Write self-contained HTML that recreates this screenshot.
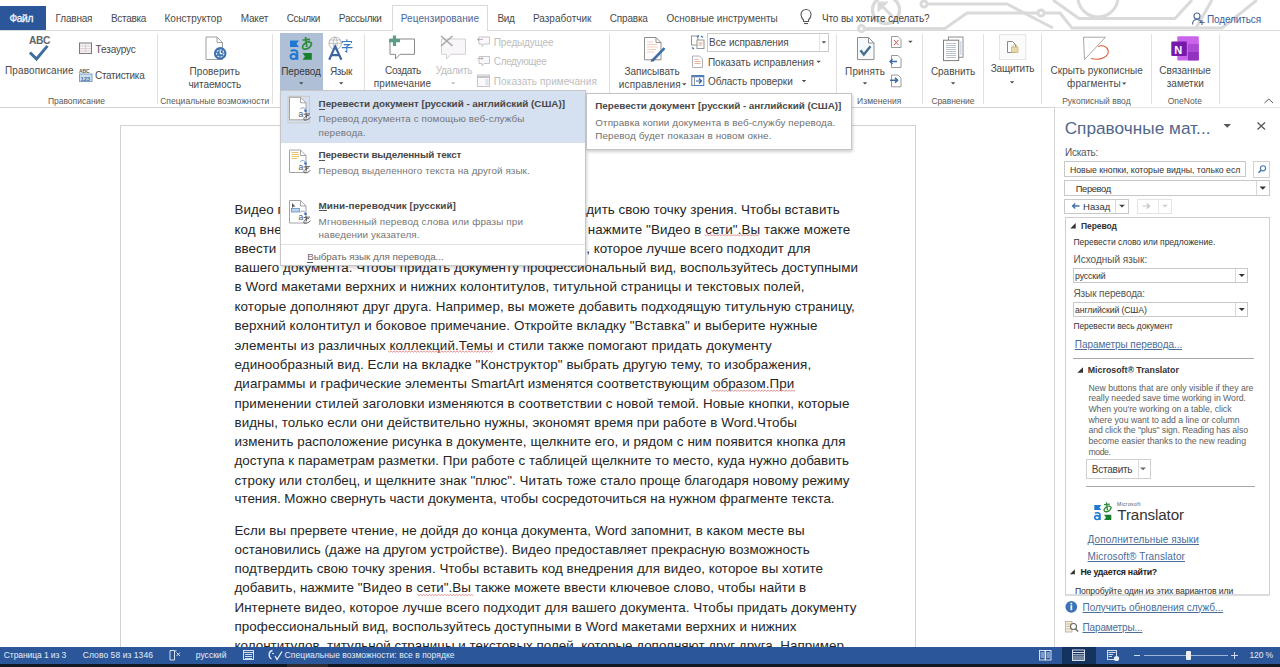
<!DOCTYPE html>
<html><head><meta charset="utf-8"><style>
html,body{margin:0;padding:0;}
body{width:1280px;height:667px;overflow:hidden;position:relative;background:#fff;font-family:"Liberation Sans",sans-serif;}
.t{position:absolute;white-space:pre;line-height:1;}
</style></head><body>
<div style="position:absolute;left:0px;top:5.5px;width:46px;height:24px;background:#2b579a;"></div>
<div style="position:absolute;left:0px;top:30px;width:1280px;height:1px;background:#dadada;"></div>
<div style="position:absolute;left:392px;top:5px;width:96px;height:26px;background:#fff;border:1px solid #dadada;border-bottom:none;box-sizing:border-box;"></div>
<div style="position:absolute;left:0px;top:107px;width:1055px;height:1px;background:#d5d5d5;"></div>
<div style="position:absolute;left:1055px;top:107px;width:225px;height:1px;background:#e6e6e6;"></div>
<div style="position:absolute;left:157px;top:34px;width:1px;height:70px;background:#e1e1e1;"></div>
<div style="position:absolute;left:272px;top:34px;width:1px;height:70px;background:#e1e1e1;"></div>
<div style="position:absolute;left:364px;top:34px;width:1px;height:70px;background:#e1e1e1;"></div>
<div style="position:absolute;left:609px;top:34px;width:1px;height:70px;background:#e1e1e1;"></div>
<div style="position:absolute;left:836px;top:34px;width:1px;height:70px;background:#e1e1e1;"></div>
<div style="position:absolute;left:922px;top:34px;width:1px;height:70px;background:#e1e1e1;"></div>
<div style="position:absolute;left:983px;top:34px;width:1px;height:70px;background:#e1e1e1;"></div>
<div style="position:absolute;left:1041px;top:34px;width:1px;height:70px;background:#e1e1e1;"></div>
<div style="position:absolute;left:1151px;top:34px;width:1px;height:70px;background:#e1e1e1;"></div>
<div style="position:absolute;left:1219px;top:34px;width:1px;height:70px;background:#e1e1e1;"></div>
<div style="position:absolute;left:279.7px;top:32.9px;width:43.7px;height:57.6px;background:#aebfd6;"></div>
<div style="position:absolute;left:120px;top:125px;width:796px;height:600px;background:#fff;border:1px solid #d2d2d2;box-sizing:border-box;"></div>
<div style="position:absolute;left:1054px;top:107px;width:1px;height:540px;background:#d4d4d4;"></div>
<div style="position:absolute;left:1064px;top:161px;width:182px;height:16px;border:1px solid #c8c8c8;box-sizing:border-box;background:#fff;"></div>
<div style="position:absolute;left:1253px;top:161px;width:17px;height:17px;border:1px solid #d0d0d0;box-sizing:border-box;background:#fff;"></div>
<div style="position:absolute;left:1064px;top:180px;width:206px;height:16px;border:1px solid #c8c8c8;box-sizing:border-box;background:#fff;"></div>
<div style="position:absolute;left:1256px;top:181px;width:1px;height:14px;background:#d8d8d8;"></div>
<div style="position:absolute;left:1064px;top:198.8px;width:65px;height:15px;border:1px solid #c8c8c8;box-sizing:border-box;background:#fff;"></div>
<div style="position:absolute;left:1115px;top:199px;width:1px;height:14px;background:#d8d8d8;"></div>
<div style="position:absolute;left:1136.7px;top:198.8px;width:35px;height:15px;border:1px solid #e3e3e3;box-sizing:border-box;background:#fff;"></div>
<div style="position:absolute;left:1158px;top:199px;width:1px;height:14px;background:#e8e8e8;"></div>
<div style="position:absolute;left:1064.5px;top:217.4px;width:205px;height:378px;border:1px solid #cfcfcf;border-bottom:1px solid #dcdcdc;box-sizing:border-box;background:#fff;"></div>
<div style="position:absolute;left:1073px;top:268px;width:175px;height:15px;border:1px solid #c8c8c8;box-sizing:border-box;background:#fff;"></div>
<div style="position:absolute;left:1235px;top:269px;width:1px;height:13px;background:#d8d8d8;"></div>
<div style="position:absolute;left:1073px;top:302.3px;width:175px;height:14.5px;border:1px solid #c8c8c8;box-sizing:border-box;background:#fff;"></div>
<div style="position:absolute;left:1235px;top:303px;width:1px;height:13px;background:#d8d8d8;"></div>
<div style="position:absolute;left:1073px;top:358.3px;width:181px;height:1px;background:#a8a8a8;"></div>
<div style="position:absolute;left:1086.4px;top:459.2px;width:64.5px;height:19.5px;border:1px solid #cfcfcf;box-sizing:border-box;background:#fff;"></div>
<div style="position:absolute;left:1137.6px;top:460px;width:1px;height:18px;background:#dcdcdc;"></div>
<div style="position:absolute;left:1086px;top:486.3px;width:169px;height:1px;background:#a8a8a8;"></div>
<div style="position:absolute;left:1064.5px;top:595px;width:205px;height:1px;background:#dcdcdc;"></div>
<svg style="position:absolute;left:0;top:0" width="1280" height="667" viewBox="0 0 1280 667"><g fill="none" stroke="#dadada" stroke-width="3">
<circle cx="886" cy="10" r="13.5" stroke-width="3.4"/>
<path d="M893 17 L881 5"/><path d="M878 2 L878 12 L888 2 Z" fill="#dadada" stroke-width="1"/>
<circle cx="924" cy="4" r="3"/>
<path d="M927 4 L1007 4 L1053 28"/>
<circle cx="861.5" cy="28.5" r="3"/>
<path d="M864.5 28.5 L945 28.5 L967 13 L1038 13"/>
<circle cx="1041" cy="13" r="3"/>
<path d="M1044 13 L1060 13 L1072 28 L1222 28 L1257 0"/>
<path d="M1053 0 L1079 18.5 L1175 18.5 L1192 0"/>
<circle cx="1098" cy="-3" r="20"/>
<path d="M1212 0 L1196 28"/>
</g></svg>
<div style="position:absolute;left:707.3px;top:32.6px;width:122.2px;height:19.1px;border:1px solid #c9c9c9;box-sizing:border-box;background:#fff;"></div>
<div style="position:absolute;left:819px;top:33.6px;width:1px;height:17px;background:#e2e2e2;"></div>
<div style="position:absolute;left:1065px;top:595.5px;width:204px;height:6px;background:#fff;"></div>
<svg style="position:absolute;left:0;top:0" width="1280" height="667" viewBox="0 0 1280 667"><g fill="none" stroke="#555" stroke-width="1.1">
<path d="M803.5 20 C801.5 18 801 16 801 14.5 C801 11.5 803.3 9.5 806 9.5 C808.7 9.5 811 11.5 811 14.5 C811 16 810.5 18 808.5 20 L808.5 21.5 L803.5 21.5 Z"/>
<path d="M804 23.5 L808 23.5"/>
</g></svg>
<svg style="position:absolute;left:0;top:0" width="1280" height="667" viewBox="0 0 1280 667"><g fill="none" stroke="#4a6a98" stroke-width="1.1">
<circle cx="1197" cy="16" r="3"/>
<path d="M1192.5 24.5 C1192.5 21 1194.5 19.5 1197 19.5 C1199 19.5 1200.5 20.5 1201 22"/>
<path d="M1199.5 22.5 L1204.5 22.5 M1202 20 L1202 25"/>
</g></svg>
<svg style="position:absolute;left:0;top:0" width="1280" height="667" viewBox="0 0 1280 667"><text x="29" y="43.8" font-family="Liberation Sans" font-weight="bold" font-size="10.2" fill="#636363" letter-spacing="-0.3">ABC</text>
<path d="M31 53.5 L36.5 59 L46.5 47" fill="none" stroke="#41709f" stroke-width="3" stroke-linecap="square"/></svg>
<svg style="position:absolute;left:0;top:0" width="1280" height="667" viewBox="0 0 1280 667"><rect x="79.5" y="43" width="12" height="10.5" fill="#f7f3f3" stroke="#7a7a7a" stroke-width="1"/>
<path d="M85.5 43 L85.5 53.5 M80 46 L91 46 M80 48.5 L91 48.5 M80 51 L91 51" stroke="#d9c8cc" stroke-width="0.8"/></svg>
<svg style="position:absolute;left:0;top:0" width="1280" height="667" viewBox="0 0 1280 667"><text x="79" y="72.8" font-family="Liberation Sans" font-weight="bold" font-size="5" fill="#555" letter-spacing="-0.1">ABC</text>
<rect x="79.5" y="74" width="12.5" height="7.5" fill="#cfe1f1" stroke="#7e9fc4" stroke-width="1"/>
<text x="80.5" y="80.6" font-family="Liberation Sans" font-weight="bold" font-size="6" fill="#4a6f98" letter-spacing="-0.2">123</text></svg>
<svg style="position:absolute;left:0;top:0" width="1280" height="667" viewBox="0 0 1280 667"><path d="M206 37 L217 37 L222.5 42.5 L222.5 59.5 L206 59.5 Z" fill="#fff" stroke="#a0a0a0" stroke-width="1"/>
<path d="M217 37 L217 42.5 L222.5 42.5" fill="none" stroke="#a0a0a0" stroke-width="1"/>
<circle cx="220.2" cy="53.4" r="6.3" fill="#3f73ad"/>
<circle cx="220.2" cy="53.4" r="3.6" fill="none" stroke="#d8e6f5" stroke-width="1.3" stroke-dasharray="2 1.2"/>
<path d="M220.2 50.5 L220.2 53.6 L222.5 53.6" stroke="#fff" stroke-width="1.1" fill="none"/></svg>
<svg style="position:absolute;left:0;top:0" width="1280" height="667" viewBox="0 0 1280 667"><path d="M290 40.5 L299 40.5 L296.5 43.7 L299 47 L290 47 Z" fill="#1f78d1"/>
<path d="M290.8 51.3 C292.5 49.8 297 49.8 297.3 52.8 L297.3 59.8" fill="none" stroke="#1f78d1" stroke-width="2"/><ellipse cx="293.6" cy="56.6" rx="3" ry="2.5" fill="none" stroke="#1f78d1" stroke-width="2"/>
<path d="M302.5 40 L310 39.3 M305.5 37 L306.8 47 M309.8 41.5 C306 41.5 302 45 302.6 47.6 C303.2 50 307.5 49.5 310 46.8 C312.5 44 311.8 41.8 308.5 41.8" fill="none" stroke="#2e8b3a" stroke-width="1.7"/>
<path d="M311.8 53 L302.5 53 L305 56.4 L302.5 59.8 L311.8 59.8 Z" fill="#17802a"/></svg>
<svg style="position:absolute;left:0;top:0" width="1280" height="667" viewBox="0 0 1280 667"><circle cx="335.2" cy="43.3" r="6.2" fill="none" stroke="#a0a0a0" stroke-width="0.8"/>
<path d="M329 43.3 L341.4 43.3 M329.8 40 L340.6 40 M335.2 37.1 C332.5 40 332.5 46.5 335.2 49.5 M335.2 37.1 C337.9 40 337.9 46.5 335.2 49.5" fill="none" stroke="#a8a8a8" stroke-width="0.7"/>
<path d="M329.2 59.8 L335.2 46.3 L341.4 59.8 M331.2 55.2 L339.4 55.2" fill="none" stroke="#3b66a3" stroke-width="2.2"/>
<path d="M346.8 39.3 L346.8 41.2 M342.3 43 L342.3 41.5 L351.5 41.5 L351.5 43 M343.8 44.6 L349.6 44.6 L346.8 46.6 L346.8 52 L345 51.2 M341.8 47.6 L352.5 47.6" fill="none" stroke="#3b7ac0" stroke-width="1.1"/></svg>
<svg style="position:absolute;left:0;top:0" width="1280" height="667" viewBox="0 0 1280 667"><path d="M390 39 L414.5 39 L414.5 54.3 L400 54.3 L395.5 59 L395.5 54.3 L390 54.3 Z" fill="#fff" stroke="#8a8a8a" stroke-width="1"/>
<path d="M394.5 35.5 L394.5 46 M389 40.7 L400 40.7" stroke="#5e9c8a" stroke-width="3.2"/></svg>
<svg style="position:absolute;left:0;top:0" width="1280" height="667" viewBox="0 0 1280 667"><path d="M441.5 39 L465.5 39 L465.5 54.3 L451 54.3 L446.5 59 L446.5 54.3 L441.5 54.3 Z" fill="#f8f6f8" stroke="#d6d0d6" stroke-width="1"/>
<path d="M441 36 L452.5 46 M452.5 36 L441 46" stroke="#a8a8a8" stroke-width="1.6"/></svg>
<svg style="position:absolute;left:0;top:0" width="1280" height="667" viewBox="0 0 1280 667"><g fill="#faf8fa" stroke="#c8c4c8" stroke-width="1">
<path d="M479 37 L489.5 37 L489.5 44 L484 44 L482 46.5 L482 44 L479 44 Z"/>
<path d="M479 56.5 L489.5 56.5 L489.5 63.5 L484 63.5 L482 66 L482 63.5 L479 63.5 Z"/>
<rect x="477.5" y="75" width="12" height="11.5"/>
</g>
<path d="M477.5 39.5 L483 39.5 M479 38 L477.5 39.5 L479 41" fill="none" stroke="#b0b0b0" stroke-width="0.9"/>
<path d="M477.5 58.5 L483 58.5 M481.5 57 L483 58.5 L481.5 60" fill="none" stroke="#b0b0b0" stroke-width="0.9"/>
<path d="M477.5 77 L489.5 77" stroke="#b8b8b8" stroke-width="1.6"/>
<path d="M485.5 80 L488.5 80 M485.5 82 L488.5 82 M485.5 84 L488.5 84" stroke="#c0c0c0" stroke-width="0.8"/></svg>
<svg style="position:absolute;left:0;top:0" width="1280" height="667" viewBox="0 0 1280 667"><path d="M644.5 37.5 L656 37.5 L661 42.5 L661 59.8 L644.5 59.8 Z" fill="#fff" stroke="#8e8e8e" stroke-width="1"/>
<path d="M656 37.5 L656 42.5 L661 42.5" fill="none" stroke="#8e8e8e" stroke-width="1"/>
<path d="M647 42 L653 42 M647 44.5 L657 44.5 M647 47 L658 47 M647 49.5 L656 49.5 M647 52 L654 52" stroke="#f4cdbb" stroke-width="1.2"/>
<path d="M652 61 L664.5 48.2" stroke="#3c6ea8" stroke-width="2.6"/>
<path d="M651.2 61.8 L652.5 59" stroke="#555" stroke-width="1"/></svg>
<svg style="position:absolute;left:0;top:0" width="1280" height="667" viewBox="0 0 1280 667"><rect x="691.5" y="36" width="6.5" height="9" fill="#fff" stroke="#8a8a8a" stroke-width="0.9"/>
<rect x="697" y="40" width="7" height="8.5" fill="#fff" stroke="#8a8a8a" stroke-width="0.9"/>
<path d="M698.5 43 L702.5 43 M698.5 45 L702 45" stroke="#e09a80" stroke-width="0.9"/>
<path d="M697 37 L699 35.5 M701 36 L703 37.5 M692 47.5 L694 49" stroke="#3d78c2" stroke-width="1.4"/>
<path d="M692.5 56 L699.5 56 L702.5 59 L702.5 67.5 L692.5 67.5 Z" fill="#fff" stroke="#a8a8a8" stroke-width="0.9"/>
<path d="M694.5 59.5 L698.5 59.5 M694.5 61.5 L700.5 61.5 M694.5 63.5 L700.5 63.5" stroke="#e6a890" stroke-width="0.9"/>
<rect x="691.8" y="75.5" width="12" height="10" fill="#fff" stroke="#4b7fbd" stroke-width="1"/>
<path d="M691.8 76.5 L703.8 76.5" stroke="#4b7fbd" stroke-width="1.5"/>
<path d="M694.5 75.5 L694.5 85.5" stroke="#8a8a8a" stroke-width="0.9"/>
<path d="M696 81 L701.5 81 M699 78.5 L701.5 81 L699 83.5" fill="none" stroke="#2f5f9e" stroke-width="1.2"/></svg>
<svg style="position:absolute;left:0;top:0" width="1280" height="667" viewBox="0 0 1280 667"><path d="M857.5 37.5 L868.5 37.5 L874 43 L874 59.6 L857.5 59.6 Z" fill="#f7fafd" stroke="#8e8e8e" stroke-width="1"/>
<path d="M868.5 37.5 L868.5 43 L874 43" fill="none" stroke="#8e8e8e" stroke-width="1"/>
<path d="M860.5 50.3 L863.8 54.5 L870.5 46.2" fill="none" stroke="#44708f" stroke-width="2.4"/></svg>
<svg style="position:absolute;left:0;top:0" width="1280" height="667" viewBox="0 0 1280 667"><g fill="#fff" stroke="#8e8e8e" stroke-width="0.9">
<path d="M891.5 36.5 L898 36.5 L901 39.5 L901 47.5 L891.5 47.5 Z"/>
<path d="M891.5 55.5 L898 55.5 L901 58.5 L901 67.5 L891.5 67.5 Z"/>
<path d="M891.5 75 L898 75 L901 78 L901 86.8 L891.5 86.8 Z"/>
</g>
<path d="M894 40 L898.5 45 M898.5 40 L894 45" stroke="#d05050" stroke-width="1"/>
<path d="M890 61.5 L897 61.5 M892.5 59 L890 61.5 L892.5 64" fill="none" stroke="#3c6aa6" stroke-width="1.4"/>
<path d="M890 80.3 L897.5 80.3 M895 77.8 L897.5 80.3 L895 82.8" fill="none" stroke="#3c6aa6" stroke-width="1.6"/></svg>
<svg style="position:absolute;left:0;top:0" width="1280" height="667" viewBox="0 0 1280 667"><rect x="948.5" y="37" width="14.5" height="20.3" fill="#fff" stroke="#8e8e8e" stroke-width="1"/>
<rect x="943.5" y="40.2" width="15.2" height="20.4" fill="#fff" stroke="#7e7e7e" stroke-width="1"/>
<path d="M946 43.5 L956 43.5 M946 45.5 L956 45.5 M946 47.5 L956 47.5 M946 49.5 L956 49.5 M946 51.5 L956 51.5 M946 53.5 L956 53.5 M946 55.5 L956 55.5 M946 57.5 L956 57.5" stroke="#a9b3c0" stroke-width="0.8"/>
<path d="M960 42 L961.5 42 M960 44 L961.5 44 M960 46 L961.5 46 M960 48 L961.5 48 M960 50 L961.5 50 M960 52 L961.5 52 M960 54 L961.5 54" stroke="#8aa0bd" stroke-width="0.8"/></svg>
<svg style="position:absolute;left:0;top:0" width="1280" height="667" viewBox="0 0 1280 667"><rect x="999.5" y="34.6" width="26.3" height="24.9" fill="#fbfbfb" stroke="#e3e3e3" stroke-width="1"/>
<path d="M1007.5 41.5 L1012.5 41.5 L1015.5 44.5 L1015.5 52.5 L1007.5 52.5 Z" fill="#fff" stroke="#7a7a7a" stroke-width="0.9"/>
<rect x="1011.5" y="47" width="6.5" height="5.5" fill="#e9d9a8" stroke="#c9b27a" stroke-width="0.7"/>
<path d="M1013 47 L1013 45.5 C1013 44 1016.5 44 1016.5 45.5 L1016.5 47" fill="none" stroke="#b9a880" stroke-width="0.8"/></svg>
<svg style="position:absolute;left:0;top:0" width="1280" height="667" viewBox="0 0 1280 667"><path d="M1105.5 37.2 L1083.5 37.2 L1084.5 59.5 Z" fill="none" stroke="#a8a8a8" stroke-width="1"/>
<path d="M1091 58.5 C1101 61 1110 56 1108 50 C1106.5 45.5 1101 45 1098 46.5" fill="none" stroke="#d4613e" stroke-width="1.1"/></svg>
<svg style="position:absolute;left:0;top:0" width="1280" height="667" viewBox="0 0 1280 667"><rect x="1177.3" y="36.3" width="21.5" height="24.1" rx="1" fill="#ca64ea"/>
<rect x="1188" y="44" width="10.8" height="8" fill="#ae4bd5"/>
<rect x="1188" y="52" width="10.8" height="8.4" fill="#9332bf"/>
<rect x="1171.3" y="41.5" width="15.5" height="14.5" rx="1" fill="#7719aa"/>
<text x="1174.3" y="53.5" font-family="Liberation Sans" font-weight="bold" font-size="11" fill="#fff">N</text></svg>
<svg style="position:absolute;left:0;top:0" width="1280" height="667" viewBox="0 0 1280 667"><path d="M1264.5 103 L1268.8 99 L1273 103" fill="none" stroke="#555" stroke-width="1"/></svg>
<div class="t" style="left:9.50px;top:13.87px;font-size:10.20px;font-weight:normal;color:#f2f5fa;letter-spacing:-0.394px;-webkit-text-stroke:0.3px #f2f5fa;">Файл</div>
<div class="t" style="left:55.60px;top:14.34px;font-size:10.00px;font-weight:normal;color:#4a4a4a;letter-spacing:-0.195px;">Главная</div>
<div class="t" style="left:111.00px;top:14.34px;font-size:10.00px;font-weight:normal;color:#4a4a4a;letter-spacing:-0.310px;">Вставка</div>
<div class="t" style="left:164.50px;top:14.34px;font-size:10.00px;font-weight:normal;color:#4a4a4a;letter-spacing:0.044px;">Конструктор</div>
<div class="t" style="left:240.80px;top:14.34px;font-size:10.00px;font-weight:normal;color:#4a4a4a;letter-spacing:-0.220px;">Макет</div>
<div class="t" style="left:286.70px;top:14.34px;font-size:10.00px;font-weight:normal;color:#4a4a4a;letter-spacing:-0.318px;">Ссылки</div>
<div class="t" style="left:338.80px;top:14.34px;font-size:10.00px;font-weight:normal;color:#4a4a4a;letter-spacing:-0.248px;">Рассылки</div>
<div class="t" style="left:400.80px;top:14.34px;font-size:10.00px;font-weight:normal;color:#48689a;letter-spacing:0.084px;">Рецензирование</div>
<div class="t" style="left:497.50px;top:14.34px;font-size:10.00px;font-weight:normal;color:#4a4a4a;letter-spacing:-0.397px;">Вид</div>
<div class="t" style="left:532.90px;top:14.34px;font-size:10.00px;font-weight:normal;color:#4a4a4a;letter-spacing:0.026px;">Разработчик</div>
<div class="t" style="left:609.80px;top:14.34px;font-size:10.00px;font-weight:normal;color:#4a4a4a;letter-spacing:-0.190px;">Справка</div>
<div class="t" style="left:666.50px;top:14.34px;font-size:10.00px;font-weight:normal;color:#4a4a4a;letter-spacing:0.016px;">Основные инструменты</div>
<div class="t" style="left:822.00px;top:14.34px;font-size:10.00px;font-weight:normal;color:#444;letter-spacing:-0.143px;">Что вы хотите сделать?</div>
<div class="t" style="left:1207.00px;top:14.84px;font-size:10.00px;font-weight:normal;color:#3b5f91;letter-spacing:-0.122px;">Поделиться</div>
<div class="t" style="left:47.90px;top:97.10px;font-size:8.50px;font-weight:normal;color:#5a5a5a;">Правописание</div>
<div class="t" style="left:160.20px;top:96.90px;font-size:8.50px;font-weight:normal;color:#5a5a5a;letter-spacing:0.025px;">Специальные возможности</div>
<div class="t" style="left:857.10px;top:96.60px;font-size:8.50px;font-weight:normal;color:#5a5a5a;letter-spacing:0.028px;">Изменения</div>
<div class="t" style="left:931.40px;top:96.60px;font-size:8.50px;font-weight:normal;color:#5a5a5a;letter-spacing:-0.078px;">Сравнение</div>
<div class="t" style="left:1062.20px;top:96.80px;font-size:8.50px;font-weight:normal;color:#5a5a5a;">Рукописный ввод</div>
<div class="t" style="left:1167.70px;top:96.80px;font-size:8.50px;font-weight:normal;color:#5a5a5a;letter-spacing:0.026px;">OneNote</div>
<div class="t" style="left:5.00px;top:66.08px;font-size:10.00px;font-weight:normal;color:#4a4a4a;letter-spacing:0.120px;">Правописание</div>
<div class="t" style="left:95.60px;top:45.44px;font-size:10.00px;font-weight:normal;color:#4a4a4a;letter-spacing:-0.144px;">Тезаурус</div>
<div class="t" style="left:95.00px;top:71.08px;font-size:10.00px;font-weight:normal;color:#4a4a4a;letter-spacing:-0.312px;">Статистика</div>
<div class="t" style="left:189.60px;top:66.73px;font-size:10.00px;font-weight:normal;color:#4a4a4a;letter-spacing:0.043px;">Проверить</div>
<div class="t" style="left:188.40px;top:79.93px;font-size:10.00px;font-weight:normal;color:#4a4a4a;letter-spacing:-0.081px;">читаемость</div>
<div class="t" style="left:281.20px;top:66.63px;font-size:10.00px;font-weight:normal;color:#3a3a3a;letter-spacing:-0.107px;">Перевод</div>
<div class="t" style="left:330.00px;top:66.63px;font-size:10.00px;font-weight:normal;color:#4a4a4a;letter-spacing:-0.368px;">Язык</div>
<div class="t" style="left:385.00px;top:66.23px;font-size:10.00px;font-weight:normal;color:#4a4a4a;letter-spacing:-0.286px;">Создать</div>
<div class="t" style="left:373.80px;top:78.93px;font-size:10.00px;font-weight:normal;color:#4a4a4a;letter-spacing:0.139px;">примечание</div>
<div class="t" style="left:435.70px;top:66.23px;font-size:10.00px;font-weight:normal;color:#bdbdbd;letter-spacing:-0.240px;">Удалить</div>
<div class="t" style="left:493.80px;top:38.23px;font-size:10.00px;font-weight:normal;color:#bdbdbd;letter-spacing:-0.169px;">Предыдущее</div>
<div class="t" style="left:493.80px;top:56.83px;font-size:10.00px;font-weight:normal;color:#bdbdbd;letter-spacing:-0.364px;">Следующее</div>
<div class="t" style="left:493.80px;top:76.73px;font-size:10.00px;font-weight:normal;color:#bdbdbd;letter-spacing:0.097px;">Показать примечания</div>
<div class="t" style="left:624.50px;top:66.83px;font-size:10.00px;font-weight:normal;color:#4a4a4a;">Записывать</div>
<div class="t" style="left:618.70px;top:79.73px;font-size:10.00px;font-weight:normal;color:#4a4a4a;letter-spacing:0.197px;">исправления</div>
<div class="t" style="left:709.00px;top:38.13px;font-size:10.00px;font-weight:normal;color:#4a4a4a;letter-spacing:-0.029px;">Все исправления</div>
<div class="t" style="left:707.90px;top:57.53px;font-size:10.00px;font-weight:normal;color:#4a4a4a;letter-spacing:0.029px;">Показать исправления</div>
<div class="t" style="left:707.90px;top:76.83px;font-size:10.00px;font-weight:normal;color:#4a4a4a;">Область проверки</div>
<div class="t" style="left:845.10px;top:66.63px;font-size:10.00px;font-weight:normal;color:#4a4a4a;letter-spacing:0.120px;">Принять</div>
<div class="t" style="left:930.90px;top:66.63px;font-size:10.00px;font-weight:normal;color:#4a4a4a;letter-spacing:-0.032px;">Сравнить</div>
<div class="t" style="left:990.80px;top:64.13px;font-size:10.00px;font-weight:normal;color:#4a4a4a;letter-spacing:-0.234px;">Защитить</div>
<div class="t" style="left:1050.50px;top:66.33px;font-size:10.00px;font-weight:normal;color:#4a4a4a;letter-spacing:0.042px;">Скрыть рукописные</div>
<div class="t" style="left:1067.10px;top:78.93px;font-size:10.00px;font-weight:normal;color:#4a4a4a;letter-spacing:0.108px;">фрагменты</div>
<div class="t" style="left:1159.30px;top:66.33px;font-size:10.00px;font-weight:normal;color:#4a4a4a;letter-spacing:-0.042px;">Связанные</div>
<div class="t" style="left:1166.70px;top:78.93px;font-size:10.00px;font-weight:normal;color:#4a4a4a;letter-spacing:0.044px;">заметки</div>
<div class="t" style="left:234.50px;top:203.26px;font-size:13.40px;font-weight:normal;color:#262626;letter-spacing:0.028px;">Видео предоставляет прекрасную возможность подтвердить свою точку зрения. Чтобы вставить</div>
<div class="t" style="left:234.50px;top:222.66px;font-size:13.40px;font-weight:normal;color:#262626;letter-spacing:0.080px;">код внедрения для видео, которое вы хотите добавить, нажмите &quot;Видео в сети&quot;.Вы также можете</div>
<div class="t" style="left:234.50px;top:241.86px;font-size:13.40px;font-weight:normal;color:#262626;">ввести ключевое слово, чтобы найти в Интернете видео, которое лучше всего подходит для</div>
<div class="t" style="left:234.50px;top:261.26px;font-size:13.40px;font-weight:normal;color:#262626;letter-spacing:0.030px;">вашего документа. Чтобы придать документу профессиональный вид, воспользуйтесь доступными</div>
<div class="t" style="left:234.50px;top:280.36px;font-size:13.40px;font-weight:normal;color:#262626;letter-spacing:0.054px;">в Word макетами верхних и нижних колонтитулов, титульной страницы и текстовых полей,</div>
<div class="t" style="left:234.50px;top:299.66px;font-size:13.40px;font-weight:normal;color:#262626;letter-spacing:0.100px;">которые дополняют друг друга. Например, вы можете добавить подходящую титульную страницу,</div>
<div class="t" style="left:234.50px;top:318.86px;font-size:13.40px;font-weight:normal;color:#262626;letter-spacing:0.078px;">верхний колонтитул и боковое примечание. Откройте вкладку &quot;Вставка&quot; и выберите нужные</div>
<div class="t" style="left:234.50px;top:338.56px;font-size:13.40px;font-weight:normal;color:#262626;letter-spacing:0.086px;">элементы из различных коллекций.Темы и стили также помогают придать документу</div>
<div class="t" style="left:234.50px;top:357.86px;font-size:13.40px;font-weight:normal;color:#262626;letter-spacing:0.093px;">единообразный вид. Если на вкладке &quot;Конструктор&quot; выбрать другую тему, то изображения,</div>
<div class="t" style="left:234.50px;top:377.16px;font-size:13.40px;font-weight:normal;color:#262626;letter-spacing:0.048px;">диаграммы и графические элементы SmartArt изменятся соответствующим образом.При</div>
<div class="t" style="left:234.50px;top:396.66px;font-size:13.40px;font-weight:normal;color:#262626;letter-spacing:0.084px;">применении стилей заголовки изменяются в соответствии с новой темой. Новые кнопки, которые</div>
<div class="t" style="left:234.50px;top:415.86px;font-size:13.40px;font-weight:normal;color:#262626;letter-spacing:0.058px;">видны, только если они действительно нужны, экономят время при работе в Word.Чтобы</div>
<div class="t" style="left:234.50px;top:435.16px;font-size:13.40px;font-weight:normal;color:#262626;letter-spacing:0.086px;">изменить расположение рисунка в документе, щелкните его, и рядом с ним появится кнопка для</div>
<div class="t" style="left:234.50px;top:454.46px;font-size:13.40px;font-weight:normal;color:#262626;letter-spacing:0.050px;">доступа к параметрам разметки. При работе с таблицей щелкните то место, куда нужно добавить</div>
<div class="t" style="left:234.50px;top:473.66px;font-size:13.40px;font-weight:normal;color:#262626;letter-spacing:0.061px;">строку или столбец, и щелкните знак &quot;плюс&quot;. Читать тоже стало проще благодаря новому режиму</div>
<div class="t" style="left:234.50px;top:492.26px;font-size:13.40px;font-weight:normal;color:#262626;letter-spacing:-0.021px;">чтения. Можно свернуть части документа, чтобы сосредоточиться на нужном фрагменте текста.</div>
<div class="t" style="left:234.50px;top:523.86px;font-size:13.40px;font-weight:normal;color:#262626;letter-spacing:0.057px;">Если вы прервете чтение, не дойдя до конца документа, Word запомнит, в каком месте вы</div>
<div class="t" style="left:234.50px;top:543.06px;font-size:13.40px;font-weight:normal;color:#262626;letter-spacing:0.033px;">остановились (даже на другом устройстве). Видео предоставляет прекрасную возможность</div>
<div class="t" style="left:234.50px;top:562.26px;font-size:13.40px;font-weight:normal;color:#262626;letter-spacing:0.028px;">подтвердить свою точку зрения. Чтобы вставить код внедрения для видео, которое вы хотите</div>
<div class="t" style="left:234.50px;top:581.46px;font-size:13.40px;font-weight:normal;color:#262626;letter-spacing:0.024px;">добавить, нажмите &quot;Видео в сети&quot;.Вы также можете ввести ключевое слово, чтобы найти в</div>
<div class="t" style="left:234.50px;top:600.66px;font-size:13.40px;font-weight:normal;color:#262626;letter-spacing:0.044px;">Интернете видео, которое лучше всего подходит для вашего документа. Чтобы придать документу</div>
<div class="t" style="left:234.50px;top:619.86px;font-size:13.40px;font-weight:normal;color:#262626;letter-spacing:0.056px;">профессиональный вид, воспользуйтесь доступными в Word макетами верхних и нижних</div>
<div class="t" style="left:234.50px;top:639.06px;font-size:13.40px;font-weight:normal;color:#262626;letter-spacing:0.025px;">колонтитулов, титульной страницы и текстовых полей, которые дополняют друг друга. Например,</div>
<div class="t" style="left:1064.70px;top:119.94px;font-size:17.20px;font-weight:normal;color:#50688a;letter-spacing:0.024px;">Справочные мат...</div>
<div class="t" style="left:1065.00px;top:148.34px;font-size:10.00px;font-weight:normal;color:#555;letter-spacing:-0.242px;">Искать:</div>
<div class="t" style="left:1070.00px;top:165.84px;font-size:8.70px;font-weight:normal;color:#333;">Новые кнопки, которые видны, только есл</div>
<div class="t" style="left:1075.70px;top:185.23px;font-size:9.30px;font-weight:normal;color:#333;letter-spacing:-0.319px;">Перевод</div>
<div class="t" style="left:1083.00px;top:201.86px;font-size:9.50px;font-weight:normal;color:#333;letter-spacing:0.036px;">Назад</div>
<div class="t" style="left:1080.90px;top:222.10px;font-size:8.50px;font-weight:bold;color:#333;letter-spacing:-0.049px;">Перевод</div>
<div class="t" style="left:1073.50px;top:237.80px;font-size:8.50px;font-weight:normal;color:#333;letter-spacing:-0.025px;">Перевести слово или предложение.</div>
<div class="t" style="left:1073.50px;top:254.53px;font-size:10.00px;font-weight:normal;color:#555;">Исходный язык:</div>
<div class="t" style="left:1075.00px;top:272.04px;font-size:8.70px;font-weight:normal;color:#333;letter-spacing:-0.103px;">русский</div>
<div class="t" style="left:1073.50px;top:288.94px;font-size:10.00px;font-weight:normal;color:#555;letter-spacing:-0.105px;">Язык перевода:</div>
<div class="t" style="left:1075.00px;top:306.44px;font-size:8.70px;font-weight:normal;color:#333;letter-spacing:-0.111px;">английский (США)</div>
<div class="t" style="left:1073.50px;top:322.49px;font-size:8.40px;font-weight:normal;color:#333;letter-spacing:-0.039px;">Перевести весь документ</div>
<div class="t" style="left:1074.80px;top:340.04px;font-size:10.00px;font-weight:normal;color:#4b6d98;letter-spacing:-0.055px;text-decoration:underline;">Параметры перевода...</div>
<div class="t" style="left:1087.80px;top:366.15px;font-size:8.80px;font-weight:bold;color:#333;">Microsoft® Translator</div>
<div class="t" style="left:1088.40px;top:383.84px;font-size:8.70px;font-weight:normal;color:#5e5e5e;letter-spacing:-0.013px;">New buttons that are only visible if they are</div>
<div class="t" style="left:1088.40px;top:394.49px;font-size:8.70px;font-weight:normal;color:#5e5e5e;letter-spacing:-0.028px;">really needed save time working in Word.</div>
<div class="t" style="left:1088.40px;top:405.14px;font-size:8.70px;font-weight:normal;color:#5e5e5e;">When you&#x27;re working on a table, click</div>
<div class="t" style="left:1088.40px;top:415.79px;font-size:8.70px;font-weight:normal;color:#5e5e5e;">where you want to add a line or column</div>
<div class="t" style="left:1088.40px;top:426.44px;font-size:8.70px;font-weight:normal;color:#5e5e5e;letter-spacing:-0.083px;">and click the &quot;plus&quot; sign. Reading has also</div>
<div class="t" style="left:1088.40px;top:437.09px;font-size:8.70px;font-weight:normal;color:#5e5e5e;letter-spacing:-0.034px;">become easier thanks to the new reading</div>
<div class="t" style="left:1088.40px;top:447.74px;font-size:8.70px;font-weight:normal;color:#5e5e5e;letter-spacing:-0.396px;">mode.</div>
<div class="t" style="left:1091.80px;top:465.14px;font-size:10.00px;font-weight:normal;color:#444;letter-spacing:-0.236px;">Вставить</div>
<div class="t" style="left:1117.30px;top:506.53px;font-size:15.20px;font-weight:normal;color:#333;letter-spacing:-0.116px;">Translator</div>
<div class="t" style="left:1116.90px;top:501.57px;font-size:5.00px;font-weight:normal;color:#555;letter-spacing:0.402px;">Microsoft</div>
<div class="t" style="left:1087.60px;top:534.73px;font-size:10.00px;font-weight:normal;color:#4b6d98;letter-spacing:0.116px;text-decoration:underline;">Дополнительные языки</div>
<div class="t" style="left:1087.60px;top:551.83px;font-size:10.00px;font-weight:normal;color:#4b6d98;letter-spacing:0.106px;text-decoration:underline;">Microsoft® Translator</div>
<div class="t" style="left:1080.50px;top:567.65px;font-size:8.80px;font-weight:bold;color:#222;letter-spacing:-0.265px;">Не удается найти?</div>
<div class="t" style="left:1074.90px;top:587.02px;font-size:8.60px;font-weight:normal;color:#333;letter-spacing:-0.066px;">Попробуйте один из этих вариантов или</div>
<div class="t" style="left:1082.50px;top:602.83px;font-size:10.00px;font-weight:normal;color:#4b6d98;letter-spacing:-0.036px;text-decoration:underline;">Получить обновления служб...</div>
<div class="t" style="left:1082.50px;top:622.73px;font-size:10.00px;font-weight:normal;color:#4b6d98;letter-spacing:-0.145px;text-decoration:underline;">Параметры...</div>
<svg style="position:absolute;left:0;top:0" width="1280" height="667" viewBox="0 0 1280 667"><path d="M299.0 82.14999999999999 L303.4 82.14999999999999 L301.2 84.45 Z" fill="#4a4a4a"/></svg>
<svg style="position:absolute;left:0;top:0" width="1280" height="667" viewBox="0 0 1280 667"><path d="M339.0 82.14999999999999 L343.4 82.14999999999999 L341.2 84.45 Z" fill="#4a4a4a"/></svg>
<svg style="position:absolute;left:0;top:0" width="1280" height="667" viewBox="0 0 1280 667"><path d="M451.0 82.14999999999999 L455.4 82.14999999999999 L453.2 84.45 Z" fill="#bdbdbd"/></svg>
<svg style="position:absolute;left:0;top:0" width="1280" height="667" viewBox="0 0 1280 667"><path d="M682.0999999999999 83.14999999999999 L686.5 83.14999999999999 L684.3 85.45 Z" fill="#4a4a4a"/></svg>
<svg style="position:absolute;left:0;top:0" width="1280" height="667" viewBox="0 0 1280 667"><path d="M821.6999999999999 41.15 L826.1 41.15 L823.9 43.449999999999996 Z" fill="#4a4a4a"/></svg>
<svg style="position:absolute;left:0;top:0" width="1280" height="667" viewBox="0 0 1280 667"><path d="M816.4 60.65 L820.8000000000001 60.65 L818.6 62.949999999999996 Z" fill="#4a4a4a"/></svg>
<svg style="position:absolute;left:0;top:0" width="1280" height="667" viewBox="0 0 1280 667"><path d="M801.8 80.05 L806.2 80.05 L804 82.35000000000001 Z" fill="#4a4a4a"/></svg>
<svg style="position:absolute;left:0;top:0" width="1280" height="667" viewBox="0 0 1280 667"><path d="M862.8 82.14999999999999 L867.2 82.14999999999999 L865 84.45 Z" fill="#4a4a4a"/></svg>
<svg style="position:absolute;left:0;top:0" width="1280" height="667" viewBox="0 0 1280 667"><path d="M908.1999999999999 40.65 L912.6 40.65 L910.4 42.949999999999996 Z" fill="#4a4a4a"/></svg>
<svg style="position:absolute;left:0;top:0" width="1280" height="667" viewBox="0 0 1280 667"><path d="M950.9 82.14999999999999 L955.3000000000001 82.14999999999999 L953.1 84.45 Z" fill="#4a4a4a"/></svg>
<svg style="position:absolute;left:0;top:0" width="1280" height="667" viewBox="0 0 1280 667"><path d="M1009.9 81.14999999999999 L1014.3000000000001 81.14999999999999 L1012.1 83.45 Z" fill="#4a4a4a"/></svg>
<svg style="position:absolute;left:0;top:0" width="1280" height="667" viewBox="0 0 1280 667"><path d="M1122.0 82.44999999999999 L1126.4 82.44999999999999 L1124.2 84.75 Z" fill="#4a4a4a"/></svg>
<svg style="position:absolute;left:0;top:0" width="1280" height="667" viewBox="0 0 1280 667"><path d="M1223.5 124 L1231 124 L1227.25 127.8 Z" fill="#555"/>
<path d="M1257.5 122.5 L1265 129.5 M1265 122.5 L1257.5 129.5" stroke="#555" stroke-width="1.3"/>
<circle cx="1263" cy="168.3" r="2.6" fill="none" stroke="#4a78b0" stroke-width="1.1"/>
<path d="M1261.2 170.1 L1258.5 172.8" stroke="#4a78b0" stroke-width="1.5"/>
<path d="M1259.5 186.5 L1266 186.5 L1262.75 189.8 Z" fill="#333"/>
<path d="M1072.5 206 L1079.5 206 M1075.3 203.5 L1072.5 206 L1075.3 208.5" fill="none" stroke="#3f6fa8" stroke-width="1.3"/>
<path d="M1119 204.8 L1125 204.8 L1122 207.6 Z" fill="#444"/>
<path d="M1142.5 206 L1149.5 206 M1146.8 203.5 L1149.5 206 L1146.8 208.5" fill="none" stroke="#c4c4c4" stroke-width="1.2"/>
<path d="M1162 204.8 L1168 204.8 L1165 207.6 Z" fill="#d0d0d0"/>
<path d="M1070.3 228.5 L1075.7 223 L1075.7 228.5 Z" fill="#333"/>
<path d="M1238.8 274 L1244.8 274 L1241.8 277 Z" fill="#333"/>
<path d="M1238.8 308 L1244.8 308 L1241.8 311 Z" fill="#333"/>
<path d="M1077.3 372.8 L1083 367.3 L1083 372.8 Z" fill="#333"/>
<path d="M1140 467.5 L1146 467.5 L1143 470.3 Z" fill="#666"/>
<path d="M1069.8 574.3 L1074.9 569.2 L1074.9 574.3 Z" fill="#333"/>
</svg>
<svg style="position:absolute;left:0;top:0" width="1280" height="667" viewBox="0 0 1280 667"><g transform="translate(1094.3 502.3) scale(0.78) translate(-290 -37)"><path d="M290 40.5 L299 40.5 L296.5 43.7 L299 47 L290 47 Z" fill="#1f78d1"/>
<path d="M290.8 51.3 C292.5 49.8 297 49.8 297.3 52.8 L297.3 59.8" fill="none" stroke="#1f78d1" stroke-width="2"/><ellipse cx="293.6" cy="56.6" rx="3" ry="2.5" fill="none" stroke="#1f78d1" stroke-width="2"/>
<path d="M302.5 40 L310 39.3 M305.5 37 L306.8 47 M309.8 41.5 C306 41.5 302 45 302.6 47.6 C303.2 50 307.5 49.5 310 46.8 C312.5 44 311.8 41.8 308.5 41.8" fill="none" stroke="#2e8b3a" stroke-width="1.7"/>
<path d="M311.8 53 L302.5 53 L305 56.4 L302.5 59.8 L311.8 59.8 Z" fill="#17802a"/></g></svg>
<svg style="position:absolute;left:0;top:0" width="1280" height="667" viewBox="0 0 1280 667"><circle cx="1071.3" cy="606.8" r="5.9" fill="#3a73b8"/>
<rect x="1070.5" y="605.3" width="1.7" height="4.8" fill="#fff"/>
<rect x="1070.5" y="602.8" width="1.7" height="1.6" fill="#fff"/>
<rect x="1065.5" y="621.5" width="6.5" height="10.5" fill="#f4efe6" stroke="#b8a890" stroke-width="0.8"/>
<path d="M1066.5 624 L1071 624 M1066.5 626.5 L1071 626.5 M1066.5 629 L1071 629" stroke="#c9a860" stroke-width="0.8"/>
<circle cx="1073.5" cy="626.5" r="3" fill="#fff" stroke="#666" stroke-width="1.1"/>
<path d="M1075.5 628.8 L1078 631.5" stroke="#666" stroke-width="1.3"/></svg>
<svg style="position:absolute;left:0;top:0" width="1280" height="667" viewBox="0 0 1280 667"><path d="M704.8 234.5 L706.3 236.1 L707.8 234.5 L709.3 236.1 L710.8 234.5 L712.3 236.1 L713.8 234.5 L715.3 236.1 L716.8 234.5 L718.3 236.1 L719.8 234.5 L721.3 236.1 L722.8 234.5 L724.3 236.1 L725.8 234.5 L727.3 236.1 L728.8 234.5 L730.3 236.1 L731.8 234.5 L733.3 236.1 L734.8 234.5 L736.3 236.1 L737.8 234.5 L739.3 236.1 L740.8 234.5 L742.3 236.1 L743.8 234.5 L745.3 236.1 L746.8 234.5 L748.3 236.1 L749.8 234.5 L751.3 236.1 L752.8 234.5 L754.3 236.1 L755.8 234.5 L757.3 236.1 L758.8 234.5" fill="none" stroke="#e07878" stroke-width="0.8"/></svg>
<svg style="position:absolute;left:0;top:0" width="1280" height="667" viewBox="0 0 1280 667"><path d="M388.0 350.8 L389.5 352.4 L391.0 350.8 L392.5 352.4 L394.0 350.8 L395.5 352.4 L397.0 350.8 L398.5 352.4 L400.0 350.8 L401.5 352.4 L403.0 350.8 L404.5 352.4 L406.0 350.8 L407.5 352.4 L409.0 350.8 L410.5 352.4 L412.0 350.8 L413.5 352.4 L415.0 350.8 L416.5 352.4 L418.0 350.8 L419.5 352.4 L421.0 350.8 L422.5 352.4 L424.0 350.8 L425.5 352.4 L427.0 350.8 L428.5 352.4 L430.0 350.8 L431.5 352.4 L433.0 350.8 L434.5 352.4 L436.0 350.8 L437.5 352.4 L439.0 350.8 L440.5 352.4 L442.0 350.8 L443.5 352.4 L445.0 350.8 L446.5 352.4 L448.0 350.8 L449.5 352.4 L451.0 350.8 L452.5 352.4 L454.0 350.8 L455.5 352.4 L457.0 350.8 L458.5 352.4 L460.0 350.8 L461.5 352.4 L463.0 350.8 L464.5 352.4 L466.0 350.8 L467.5 352.4 L469.0 350.8 L470.5 352.4 L472.0 350.8 L473.5 352.4 L475.0 350.8 L476.5 352.4 L478.0 350.8 L479.5 352.4 L481.0 350.8 L482.5 352.4 L484.0 350.8 L485.5 352.4 L487.0 350.8 L488.5 352.4 L490.0 350.8 L491.5 352.4 L493.0 350.8" fill="none" stroke="#e07878" stroke-width="0.8"/></svg>
<svg style="position:absolute;left:0;top:0" width="1280" height="667" viewBox="0 0 1280 667"><path d="M711.2 389.9 L712.7 391.5 L714.2 389.9 L715.7 391.5 L717.2 389.9 L718.7 391.5 L720.2 389.9 L721.7 391.5 L723.2 389.9 L724.7 391.5 L726.2 389.9 L727.7 391.5 L729.2 389.9 L730.7 391.5 L732.2 389.9 L733.7 391.5 L735.2 389.9 L736.7 391.5 L738.2 389.9 L739.7 391.5 L741.2 389.9 L742.7 391.5 L744.2 389.9 L745.7 391.5 L747.2 389.9 L748.7 391.5 L750.2 389.9 L751.7 391.5 L753.2 389.9 L754.7 391.5 L756.2 389.9 L757.7 391.5 L759.2 389.9 L760.7 391.5 L762.2 389.9 L763.7 391.5 L765.2 389.9 L766.7 391.5 L768.2 389.9 L769.7 391.5 L771.2 389.9 L772.7 391.5 L774.2 389.9 L775.7 391.5 L777.2 389.9 L778.7 391.5 L780.2 389.9 L781.7 391.5 L783.2 389.9 L784.7 391.5 L786.2 389.9 L787.7 391.5 L789.2 389.9 L790.7 391.5 L792.2 389.9 L793.7 391.5 L795.2 389.9" fill="none" stroke="#e07878" stroke-width="0.8"/></svg>
<svg style="position:absolute;left:0;top:0" width="1280" height="667" viewBox="0 0 1280 667"><path d="M417.6 594.2 L419.1 595.8 L420.6 594.2 L422.1 595.8 L423.6 594.2 L425.1 595.8 L426.6 594.2 L428.1 595.8 L429.6 594.2 L431.1 595.8 L432.6 594.2 L434.1 595.8 L435.6 594.2 L437.1 595.8 L438.6 594.2 L440.1 595.8 L441.6 594.2 L443.1 595.8 L444.6 594.2 L446.1 595.8 L447.6 594.2 L449.1 595.8 L450.6 594.2 L452.1 595.8 L453.6 594.2 L455.1 595.8 L456.6 594.2 L458.1 595.8 L459.6 594.2 L461.1 595.8 L462.6 594.2 L464.1 595.8 L465.6 594.2 L467.1 595.8 L468.6 594.2 L470.1 595.8 L471.6 594.2 L473.1 595.8" fill="none" stroke="#e07878" stroke-width="0.8"/></svg>
<div style="position:absolute;left:279.5px;top:90px;width:306px;height:175.5px;background:#fff;border:1px solid #c6c6c6;box-sizing:border-box;box-shadow:1px 2px 3px rgba(0,0,0,0.18);"></div>
<div style="position:absolute;left:280.5px;top:90.5px;width:304.5px;height:52px;background:#d5e0f1;"></div>
<div style="position:absolute;left:280.5px;top:244px;width:304.5px;height:1px;background:#e2e2e2;"></div>
<svg style="position:absolute;left:0;top:0" width="1280" height="667" viewBox="0 0 1280 667"><rect x="288" y="96.3" width="21.5" height="26.5" fill="none" stroke="#cfc8c0" stroke-width="1"/><path d="M289.5 97.3 L300.5 97.3 L306 102.8 L306 119.8 L289.5 119.8 Z" fill="#fff" stroke="#9a9a9a" stroke-width="0.9"/>
<path d="M300.5 97.3 L300.5 102.8 L306 102.8" fill="none" stroke="#9a9a9a" stroke-width="0.9"/>
<text x="298.5" y="116.8" font-family="Liberation Sans" font-size="8.5" fill="#555">a</text>
<path d="M303.5 114.3 L310 113.8 M306 112.8 L306.5 117.8 M309 115.3 C306 115.3 303 117.8 304 119.8 C305 120.8 309 119.8 310.5 117.3" fill="none" stroke="#555" stroke-width="0.9"/>
<path d="M300 109.3 C301 107.8 303 107.3 304.5 108.3 L305.5 110.3" fill="none" stroke="#7a9cc0" stroke-width="0.9"/>
<circle cx="305.5" cy="110.8" r="1.3" fill="#3a73b8"/></svg>
<svg style="position:absolute;left:0;top:0" width="1280" height="667" viewBox="0 0 1280 667"><path d="M289.5 150.0 L300.5 150.0 L306 155.5 L306 172.5 L289.5 172.5 Z" fill="#fff" stroke="#9a9a9a" stroke-width="0.9"/>
<path d="M300.5 150.0 L300.5 155.5 L306 155.5" fill="none" stroke="#9a9a9a" stroke-width="0.9"/>
<text x="298.5" y="169.5" font-family="Liberation Sans" font-size="8.5" fill="#555">a</text>
<path d="M303.5 167.0 L310 166.5 M306 165.5 L306.5 170.5 M309 168.0 C306 168.0 303 170.5 304 172.5 C305 173.5 309 172.5 310.5 170.0" fill="none" stroke="#555" stroke-width="0.9"/>
<path d="M300 162.0 C301 160.5 303 160.0 304.5 161.0 L305.5 163.0" fill="none" stroke="#7a9cc0" stroke-width="0.9"/>
<circle cx="305.5" cy="163.5" r="1.3" fill="#3a73b8"/><path d="M291.5 152.5 L298.5 152.5 M291.5 154.5 L299 154.5 M291.5 156.5 L299 156.5 M291.5 158.5 L297 158.5" stroke="#e8c070" stroke-width="1"/></svg>
<svg style="position:absolute;left:0;top:0" width="1280" height="667" viewBox="0 0 1280 667"><path d="M289.5 200.5 L300.5 200.5 L306 206 L306 223 L289.5 223 Z" fill="#fff" stroke="#9a9a9a" stroke-width="0.9"/>
<path d="M300.5 200.5 L300.5 206 L306 206" fill="none" stroke="#9a9a9a" stroke-width="0.9"/>
<text x="298.5" y="220" font-family="Liberation Sans" font-size="8.5" fill="#555">a</text>
<path d="M303.5 217.5 L310 217 M306 216 L306.5 221 M309 218.5 C306 218.5 303 221 304 223 C305 224 309 223 310.5 220.5" fill="none" stroke="#555" stroke-width="0.9"/>
<path d="M300 212.5 C301 211 303 210.5 304.5 211.5 L305.5 213.5" fill="none" stroke="#7a9cc0" stroke-width="0.9"/>
<circle cx="305.5" cy="214" r="1.3" fill="#3a73b8"/><path d="M292 203 L292 208 L293.5 206.5 L295.5 206.5 Z" fill="#555"/>
<rect x="291.5" y="208.5" width="8" height="3.5" fill="#bcd4ee" stroke="#5d8fc8" stroke-width="0.8"/></svg>
<div style="position:absolute;left:318.6px;top:108.8px;width:6.399999999999977px;height:0.9px;background:#555;"></div>
<div style="position:absolute;left:318.6px;top:159.6px;width:6.399999999999977px;height:0.9px;background:#555;"></div>
<div style="position:absolute;left:318.6px;top:210.3px;width:8.399999999999977px;height:0.9px;background:#555;"></div>
<div style="position:absolute;left:307.2px;top:261.6px;width:5.800000000000011px;height:0.9px;background:#555;"></div>
<div class="t" style="left:318.60px;top:99.12px;font-size:9.90px;font-weight:bold;color:#484848;letter-spacing:-0.034px;">Перевести документ [русский - английский (США)]</div>
<div class="t" style="left:318.60px;top:114.22px;font-size:9.90px;font-weight:normal;color:#767676;letter-spacing:0.095px;">Перевод документа с помощью веб-службы</div>
<div class="t" style="left:318.60px;top:127.72px;font-size:9.90px;font-weight:normal;color:#767676;letter-spacing:0.095px;">перевода.</div>
<div class="t" style="left:318.60px;top:149.92px;font-size:9.90px;font-weight:bold;color:#484848;letter-spacing:-0.172px;">Перевести выделенный текст</div>
<div class="t" style="left:318.60px;top:165.52px;font-size:9.90px;font-weight:normal;color:#767676;letter-spacing:0.080px;">Перевод выделенного текста на другой язык.</div>
<div class="t" style="left:318.60px;top:200.62px;font-size:9.90px;font-weight:bold;color:#484848;letter-spacing:0.050px;">Мини-переводчик [русский]</div>
<div class="t" style="left:318.60px;top:216.82px;font-size:9.90px;font-weight:normal;color:#767676;letter-spacing:0.136px;">Мгновенный перевод слова или фразы при</div>
<div class="t" style="left:318.60px;top:230.32px;font-size:9.90px;font-weight:normal;color:#767676;letter-spacing:0.051px;">наведении указателя.</div>
<div class="t" style="left:307.20px;top:251.92px;font-size:9.90px;font-weight:normal;color:#6a6a6a;letter-spacing:-0.051px;">Выбрать язык для перевода...</div>
<div style="position:absolute;left:585.9px;top:92.5px;width:266.3px;height:57.7px;background:#fff;border:1px solid #c4c4c4;box-sizing:border-box;box-shadow:1px 2px 3px rgba(0,0,0,0.18);"></div>
<div class="t" style="left:595.30px;top:100.82px;font-size:9.90px;font-weight:bold;color:#4a4a4a;letter-spacing:-0.041px;">Перевести документ [русский - английский (США)]</div>
<div class="t" style="left:595.30px;top:118.42px;font-size:9.90px;font-weight:normal;color:#707070;letter-spacing:0.092px;">Отправка копии документа в веб-службу перевода.</div>
<div class="t" style="left:595.30px;top:130.82px;font-size:9.90px;font-weight:normal;color:#707070;letter-spacing:0.113px;">Перевод будет показан в новом окне.</div>
<div style="position:absolute;left:0px;top:647px;width:1280px;height:17px;background:#2b579a;"></div>
<div style="position:absolute;left:0px;top:664px;width:1280px;height:3px;background:#111a22;"></div>
<div style="position:absolute;left:1062.3px;top:647px;width:33.3px;height:17px;background:#15335f;"></div>
<div style="position:absolute;left:1143.9px;top:655px;width:84.3px;height:1px;background:#9fb6d8;"></div>
<div style="position:absolute;left:1185.5px;top:651.2px;width:5px;height:9px;background:#f0f0f0;border-radius:1px;"></div>
<div style="position:absolute;left:1133.8px;top:655px;width:6px;height:1px;background:#cfdcee;"></div>
<div style="position:absolute;left:1231.3px;top:655px;width:7px;height:1px;background:#cfdcee;"></div>
<div style="position:absolute;left:1234.3px;top:652px;width:1px;height:7px;background:#cfdcee;"></div>
<svg style="position:absolute;left:0;top:0" width="1280" height="667" viewBox="0 0 1280 667"><g fill="none" stroke="#e8eef7" stroke-width="0.9">
<path d="M170 650.5 L174.5 650.5 L174.5 660 L170 660 Z M174.5 651.5 L176.5 650.5"/>
<path d="M176.5 656 L180 652.5 M176.5 652.5 L180 656"/>
<rect x="243.5" y="650.5" width="10" height="9"/>
<path d="M243.5 652.5 L253.5 652.5 M245 654.5 L252 654.5 M245 656.5 L252 656.5 M245 658.5 L252 658.5"/>
<path d="M272.5 650.5 C268.5 651 268 657 271.5 659 M275 656 L277 659.5 L282 651.5" stroke-width="1.3"/>
<path d="M272 653.5 L274 653.5"/>
<rect x="1039.5" y="650.5" width="5.5" height="9.5"/><rect x="1045.5" y="650.5" width="5.5" height="9.5"/>
<path d="M1040.5 653 L1044 653 M1040.5 655 L1044 655 M1040.5 657 L1044 657 M1046.5 653 L1050 653 M1046.5 655 L1050 655 M1046.5 657 L1050 657"/>
<rect x="1072.5" y="650" width="12" height="10.5"/>
<path d="M1073 652.5 L1084 652.5 M1073 654.8 L1084 654.8 M1073 657 L1084 657 M1073 659 L1084 659"/>
<rect x="1107.5" y="650.5" width="9" height="9"/>
<path d="M1108.5 652.5 L1115.5 652.5 M1108.5 654.5 L1113 654.5 M1108.5 656.5 L1112 656.5"/>
</g>
<circle cx="1116.5" cy="658.5" r="2.6" fill="#e8eef7"/></svg>
<div style="position:absolute;left:287px;top:664px;width:40.6px;height:3px;background:#2e2c30;"></div>
<div class="t" style="left:3.80px;top:651.10px;font-size:8.50px;font-weight:normal;color:#e6ecf5;letter-spacing:-0.087px;">Страница 1 из 3</div>
<div class="t" style="left:82.80px;top:651.10px;font-size:8.50px;font-weight:normal;color:#e6ecf5;letter-spacing:0.065px;">Слово 58 из 1346</div>
<div class="t" style="left:195.80px;top:651.10px;font-size:8.50px;font-weight:normal;color:#e6ecf5;letter-spacing:0.014px;">русский</div>
<div class="t" style="left:284.60px;top:651.10px;font-size:8.50px;font-weight:normal;color:#e6ecf5;letter-spacing:0.054px;">Специальные возможности: все в порядке</div>
<div class="t" style="left:1249.50px;top:651.20px;font-size:8.50px;font-weight:normal;color:#e6ecf5;letter-spacing:-0.140px;">120 %</div>
</body></html>
